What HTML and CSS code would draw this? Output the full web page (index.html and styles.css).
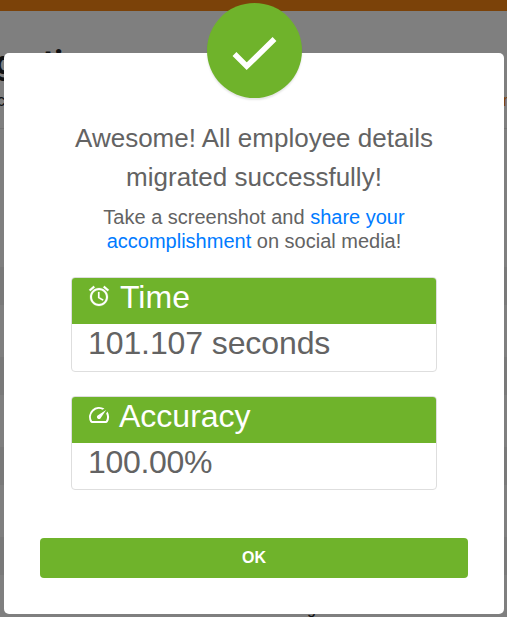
FILE: index.html
```html
<!DOCTYPE html>
<html lang="en">
<head>
<meta charset="utf-8">
<title>Migration</title>
<link rel="stylesheet" href="styles.css">
</head>
<body>
<div class="page">
  <div class="topbar"></div>
  <header class="intro">
    <h1 class="heading">gration</h1>
    <div class="intro-row"><span>c</span><span class="intro-link">m</span></div>
  </header>
  <div class="rows"></div>
  <div class="page-footer">g</div>
</div>
<div class="overlay">
  <div class="modal">
    <div class="badge">
      <svg viewBox="0 0 95 95"><path d="M27.500 51 39.700 63.200 67.500 36" fill="none" stroke="#fff" stroke-width="5.500"/></svg>
    </div>
    <h2 class="title">Awesome! All employee details migrated successfully!</h2>
    <p class="subtitle">Take a screenshot and <a class="link">share your<br>accomplishment</a> on social media!</p>
    <div class="cards">
      <section class="card">
        <div class="card-header">
          <svg class="icon" viewBox="0 0 24 24" fill="#fff" stroke="#fff" stroke-width=".2"><path d="M22 5.720l-4.600-3.860-1.290 1.530 4.600 3.860L22 5.720zM7.880 3.390L6.600 1.860 2 5.710l1.290 1.530 4.590-3.850zM12.500 8H11v6l4.750 2.850.75-1.230-4-2.370V8zM12 4c-4.970 0-9 4.030-9 9s4.020 9 9 9c4.970 0 9-4.030 9-9s-4.030-9-9-9zm0 16c-3.870 0-7-3.130-7-7s3.130-7 7-7 7 3.130 7 7-3.130 7-7 7z"/></svg>
          <span class="label time">Time</span>
        </div>
        <div class="value">101.107 seconds</div>
      </section>
      <section class="card">
        <div class="card-header">
          <svg class="icon" viewBox="0 0 24 24" fill="#fff"><path d="M20.380 8.570l-1.230 1.850a8 8 0 0 1-.22 7.580H5.070A8 8 0 0 1 15.580 6.850l1.850-1.230A10 10 0 0 0 3.350 19a2 2 0 0 0 1.720 1h13.850a2 2 0 0 0 1.740-1 10 10 0 0 0-.27-10.440zm-9.790 6.840a2 2 0 0 0 2.830 0l5.660-8.490-8.490 5.660a2 2 0 0 0 0 2.830z"/></svg>
          <span class="label">Accuracy</span>
        </div>
        <div class="value percent">100.00%</div>
      </section>
    </div>
    <button class="ok">OK</button>
  </div>
</div>
</body>
</html>
```
FILE: styles.css
```css
* { box-sizing: border-box; }
body {
  margin: 0;
  height: 617px;
  overflow: hidden;
  background: #fff;
  font-family: "Liberation Sans", Arial, sans-serif;
  color: #636363;
}
.page { height: 617px; overflow: hidden; color: #212529; }
.topbar { height: 11px; background: #f78412; }
.intro { height: 118px; padding-top: 31px; border-bottom: 1px solid #e6e6e6; }
.heading {
  margin: 0 0 0 -5px;
  font: bold 33px/42px Roboto, sans-serif;
}
.intro-row {
  display: flex;
  justify-content: space-between;
  margin: 8px -9px 0 -3px;
  font-size: 16px;
  line-height: 18px;
}
.intro-link { color: #f78412; }
.rows {
  height: 463px;
  background: repeating-linear-gradient(#fff 0 52px, #f2f2f2 52px 90px) 0 86px no-repeat;
}
.page-footer {
  height: 25px;
  padding-left: 307px;
  font-size: 16px;
  line-height: 34px;
}
.overlay {
  position: fixed;
  inset: 0;
  padding: 53px 3px 3px 4px;
  background: rgba(0, 0, 0, 0.5);
}
.modal {
  position: relative;
  display: flex;
  flex-direction: column;
  height: 561px;
  padding: 66px 36px 36px;
  background: #fff;
  border-radius: 5px;
}
.badge {
  position: absolute;
  top: -50px;
  left: 203px;
  width: 95px;
  height: 95px;
  border-radius: 50%;
  background: #6fb32b;
  box-shadow: 0 2px 2px rgba(0, 0, 0, 0.1);
}
.badge svg { display: block; }
.title {
  margin: 0 30px;
  font-size: 26px;
  font-weight: 400;
  line-height: 39px;
  text-align: center;
}
.subtitle {
  margin: 8px 0 0;
  font-size: 20px;
  line-height: 24px;
  text-align: center;
}
.link { color: #007bff; }
.cards {
  display: flex;
  flex-direction: column;
  gap: 24px;
  margin: 24px 31px 0;
}
.card {
  height: 95px;
  border: 1px solid #dedede;
  border-radius: 4px;
  overflow: hidden;
}
.card + .card { height: 94px; }
.card-header {
  display: flex;
  height: 46px;
  padding: 0 15px;
  background: #6fb32b;
  color: #fff;
}
.icon { width: 24px; height: 24px; margin-top: 6px; }
.label { margin-left: 8px; font-size: 32px; line-height: 38px; }
.time { margin-left: 9px; }
.value {
  padding-left: 16px;
  font-size: 32px;
  line-height: 38px;
  letter-spacing: -0.1px;
}
.percent { letter-spacing: -0.3px; }
.ok {
  height: 40px;
  margin-top: auto;
  border: 0;
  border-radius: 4px;
  background: #6fb32b;
  color: #fff;
  font: bold 16px "Liberation Sans", Arial, sans-serif;
}
```
